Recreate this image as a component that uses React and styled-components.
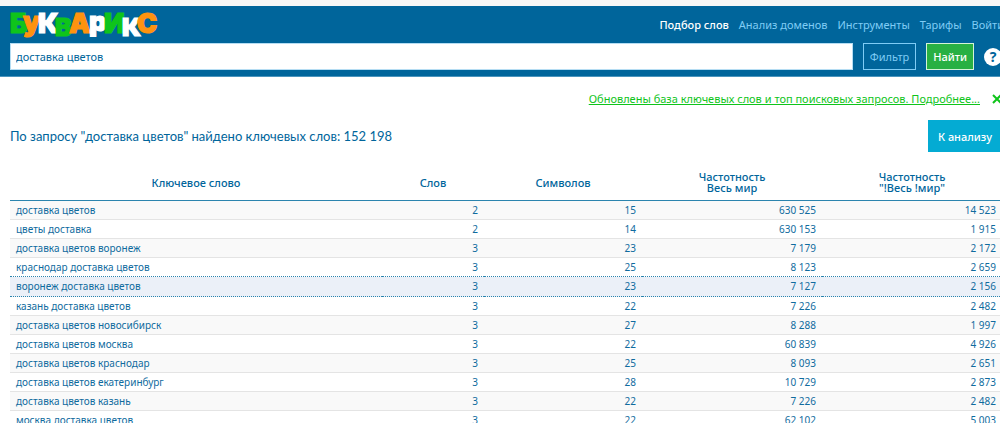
import React from "react";
import styled, { createGlobalStyle, css } from "styled-components";

const blue = "#00659b";
const sky = "#7fccf5";
const green = "#0fc41b";

const GlobalStyle = createGlobalStyle`
  * { box-sizing: border-box; }
  body {
    margin: 0;
    background: #fff;
    color: ${blue};
    font-family: "Noto Sans", "Open Sans", sans-serif;
    font-size: 11px;
    overflow: hidden;
  }
  button, input { font: inherit; }
`;

const Page = styled.div`
  border-top: 6px solid #f7f7f7;
  overflow: hidden;
`;

const Header = styled.header`
  background: ${blue};
  border-bottom: 1px solid #4a94bd;
  padding: 5px 0 6px 10px;
  margin-right: -2px;
`;

const TopBar = styled.div`
  display: flex;
  justify-content: space-between;
  align-items: flex-start;
  height: 28px;
`;

const Logo = styled.svg`
  display: block;
  width: 150px;
  height: 28px;
  overflow: visible;
  font-family: "Inter", sans-serif;
  font-weight: 900;
`;

const Nav = styled.nav`
  display: flex;
  gap: 10px;
  margin-right: -2px;
  line-height: 28px;
`;

const NavLink = styled.a`
  color: ${props => (props.$active ? "#fff" : sky)};
  font-weight: ${props => (props.$active ? 500 : 400)};
  text-decoration: none;
`;

const SearchForm = styled.form`
  display: flex;
  align-items: center;
  gap: 10px;
  margin-top: 4px;
`;

const SearchInput = styled.input`
  flex: 1;
  height: 27px;
  padding: 0 5px;
  border: 1px solid #b5ddf3;
  background: #fff;
  color: ${blue};
`;

const Button = styled.button`
  height: 27px;
  padding: 0 6px;
  border: 1px solid ${sky};
  background: transparent;
  color: ${sky};
  ${props =>
    props.$primary &&
    css`
      border: 1px solid #d4f3d8;
      background: #28b043;
      color: #fff;
      font-weight: 500;
    `}
`;

const HelpButton = styled.button`
  width: 18px;
  height: 18px;
  padding: 0;
  border: 0;
  border-radius: 50%;
  background: #fff;
  color: ${blue};
  font-size: 14px;
  font-weight: 700;
  line-height: 18px;
`;

const Content = styled.main`
  margin: 0 -2px 0 10px;
`;

const Notice = styled.div`
  display: flex;
  justify-content: flex-end;
  align-items: center;
  gap: 12px;
  height: 43px;
`;

const NoticeLink = styled.a`
  color: ${green};
`;

const CloseButton = styled.button`
  display: flex;
  padding: 0;
  border: 0;
  background: none;
  color: ${green};
`;

const Summary = styled.div`
  display: flex;
  justify-content: space-between;
  align-items: center;
`;

const Title = styled.h1`
  margin: 0;
  font-family: "Lato", "Noto Sans", sans-serif;
  font-size: 13px;
  font-weight: 400;
`;

const AnalyzeButton = styled.button`
  height: 32px;
  padding: 0 10px;
  border: 0;
  background: #04abd3;
  color: #fff;
  font-weight: 500;
`;

const Table = styled.table`
  width: 100%;
  margin-top: 12px;
  border-collapse: separate;
  border-spacing: 0;
  table-layout: fixed;
`;

const HeadCell = styled.th`
  width: ${props => props.$width};
  height: 37px;
  padding: 0;
  border-bottom: 1px solid #2b84ae;
  font-weight: 500;
  line-height: 11px;
`;

const Row = styled.tr`
  background: ${props => (props.$odd ? "#f9f9f9" : "#fff")};
  ${props =>
    props.$active &&
    css`
      background: #ebf0f8;
    `}
`;

const Cell = styled.td`
  height: 19px;
  padding: 0 6px;
  border-bottom: 1px solid #e4e4e4;
  color: #0f6b9e;
  font-size: 10px;
  line-height: 17px;
  text-align: ${props => (props.$number ? "right" : "left")};
  ${props =>
    props.$beforeActive &&
    css`
      border-bottom: 1px dotted #2b84ae;
    `}
  ${props =>
    props.$active &&
    css`
      height: 20px;
      border-bottom: 1px dotted #2b84ae;
    `}
`;

const letters = [
  { char: "Б", x: 0, y: 22, fill: "#0fc41b", size: 27 },
  { char: "у", x: 13, y: 20, fill: "#ff930f", size: 27 },
  { char: "К", x: 28, y: 22, fill: "#fff", size: 27 },
  { char: "В", x: 45, y: 25, fill: "#0fc41b", size: 25 },
  { char: "А", x: 59, y: 22, fill: "#ff930f", size: 27 },
  { char: "р", x: 79, y: 20, fill: "#fff", size: 27 },
  { char: "И", x: 94, y: 22, fill: "#0fc41b", size: 27 },
  { char: "К", x: 112, y: 25, fill: "#fff", size: 25 },
  { char: "С", x: 127, y: 22, fill: "#ff930f", size: 27 }
];

const links = ["Подбор слов", "Анализ доменов", "Инструменты", "Тарифы", "Войти"];

const rows = [
  ["доставка цветов", "2", "15", "630 525", "14 523"],
  ["цветы доставка", "2", "14", "630 153", "1 915"],
  ["доставка цветов воронеж", "3", "23", "7 179", "2 172"],
  ["краснодар доставка цветов", "3", "25", "8 123", "2 659"],
  ["воронеж доставка цветов", "3", "23", "7 127", "2 156"],
  ["казань доставка цветов", "3", "22", "7 226", "2 482"],
  ["доставка цветов новосибирск", "3", "27", "8 288", "1 997"],
  ["доставка цветов москва", "3", "22", "60 839", "4 926"],
  ["доставка цветов краснодар", "3", "25", "8 093", "2 651"],
  ["доставка цветов екатеринбург", "3", "28", "10 729", "2 873"],
  ["доставка цветов казань", "3", "22", "7 226", "2 482"],
  ["москва доставка цветов", "3", "22", "62 102", "5 003"]
];

const activeRow = 4;

const App = () => (
  <Page>
    <GlobalStyle />
    <Header>
      <TopBar>
        <Logo viewBox="0 0 150 28" role="img" aria-label="Букварикс">
          {letters.map(l => (
            <text
              key={l.x}
              x={l.x}
              y={l.y}
              fill={l.fill}
              stroke={l.fill}
              strokeWidth="1.2"
              fontSize={l.size}
            >
              {l.char}
            </text>
          ))}
        </Logo>
        <Nav>
          {links.map((link, i) => (
            <NavLink key={link} href="#" $active={i === 0}>
              {link}
            </NavLink>
          ))}
        </Nav>
      </TopBar>
      <SearchForm>
        <SearchInput aria-label="Ключевое слово" defaultValue="доставка цветов" />
        <Button type="button">Фильтр</Button>
        <Button type="submit" $primary>
          Найти
        </Button>
        <HelpButton type="button">?</HelpButton>
      </SearchForm>
    </Header>
    <Content>
      <Notice>
        <NoticeLink href="#">
          Обновлены база ключевых слов и топ поисковых запросов. Подробнее...
        </NoticeLink>
        <CloseButton type="button" aria-label="Закрыть">
          <svg width="10" height="10" viewBox="0 0 10 10">
            <path d="M1 1L9 9M9 1L1 9" stroke="currentColor" strokeWidth="2" />
          </svg>
        </CloseButton>
      </Notice>
      <Summary>
        <Title>По запросу "доставка цветов" найдено ключевых слов: 152 198</Title>
        <AnalyzeButton type="button">К анализу</AnalyzeButton>
      </Summary>
      <Table>
        <thead>
          <tr>
            <HeadCell>Ключевое слово</HeadCell>
            <HeadCell $width="102px">Слов</HeadCell>
            <HeadCell $width="158px">Символов</HeadCell>
            <HeadCell $width="180px">
              Частотность
              <br />
              Весь мир
            </HeadCell>
            <HeadCell $width="180px">
              Частотность
              <br />
              "!Весь !мир"
            </HeadCell>
          </tr>
        </thead>
        <tbody>
          {rows.map((row, i) => (
            <Row key={row[0]} $odd={i % 2 === 0} $active={i === activeRow}>
              {row.map((value, j) => (
                <Cell
                  key={j}
                  $number={j > 0}
                  $active={i === activeRow}
                  $beforeActive={i === activeRow - 1}
                >
                  {value}
                </Cell>
              ))}
            </Row>
          ))}
        </tbody>
      </Table>
    </Content>
  </Page>
);

export default App;
